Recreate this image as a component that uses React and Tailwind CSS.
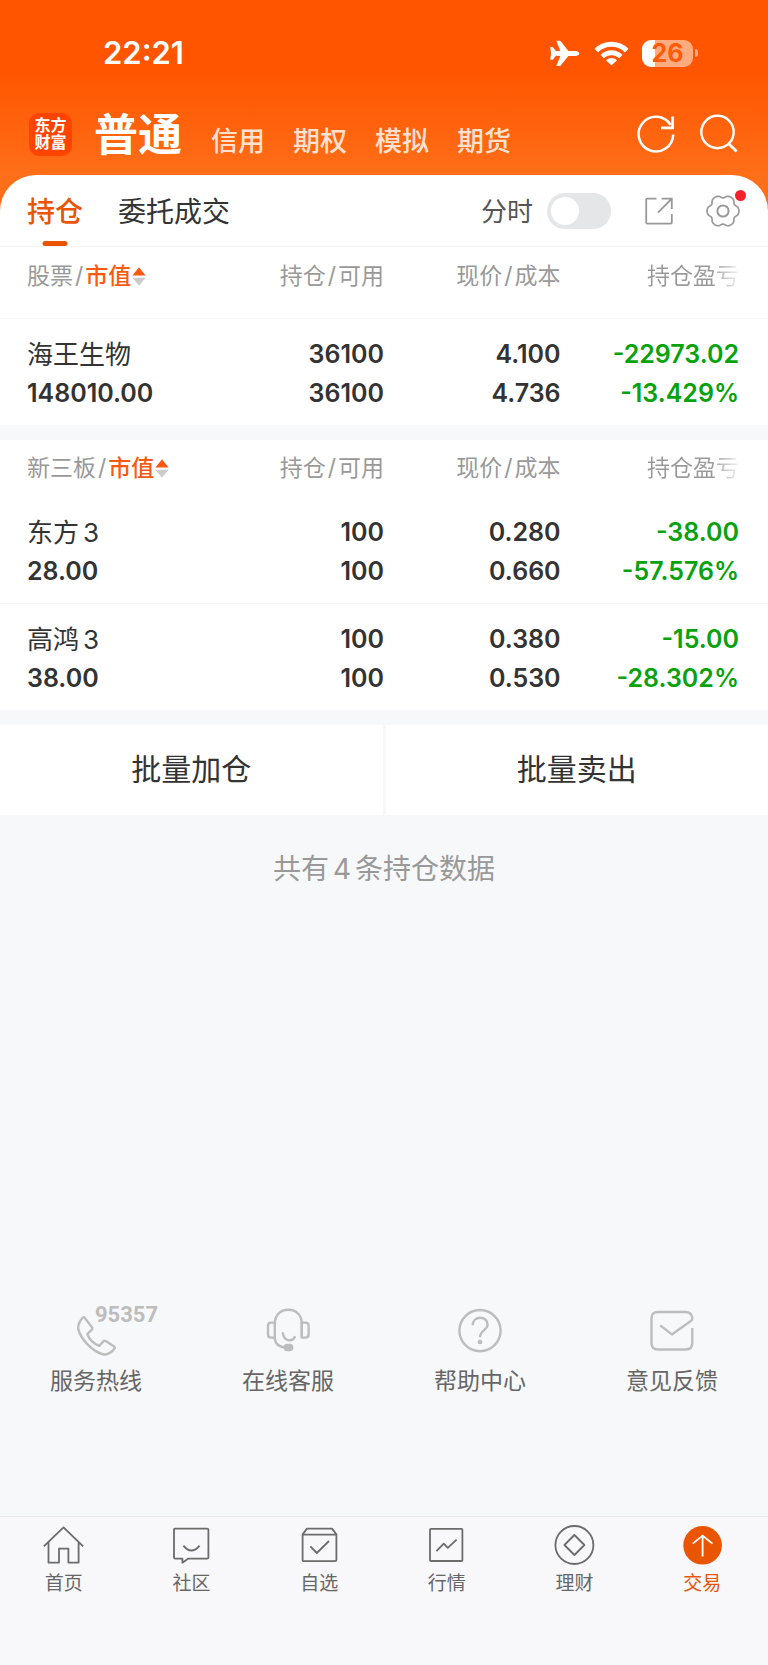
import React from "react";

const TOP_TABS = ["信用", "期权", "模拟", "期货"];

const SECTIONS = [
  {
    title: "股票",
    spaced: true,
    rows: [
      { name: "海王生物", suffix: "", value: "148010.00", held: "36100", free: "36100", price: "4.100", cost: "4.736", profit: "-22973.02", rate: "-13.429%" },
    ],
  },
  {
    title: "新三板",
    spaced: false,
    rows: [
      { name: "东方", suffix: "3", value: "28.00", held: "100", free: "100", price: "0.280", cost: "0.660", profit: "-38.00", rate: "-57.576%" },
      { name: "高鸿", suffix: "3", value: "38.00", held: "100", free: "100", price: "0.380", cost: "0.530", profit: "-15.00", rate: "-28.302%" },
    ],
  },
];

const GEAR_POINTS = Array.from({ length: 90 }, (_, i) => {
  const a = (i * 4 * Math.PI) / 180;
  const r = 14.8 + 1.4 * Math.cos(6 * a) - 0.35 * Math.cos(12 * a);
  return `${(18 + r * Math.cos(a)).toFixed(2)},${(18 + r * Math.sin(a)).toFixed(2)}`;
}).join(" ");

function StatusBar() {
  return (
    <div className="flex h-[100px] items-center justify-between pt-1.5 pl-[103px] pr-[70px]">
      <span className="text-[31px] leading-10 font-semibold">22:21</span>
      <div className="flex items-center">
        <svg className="mr-3.5 h-[27px] w-[30px]" viewBox="0 0 30 27" fill="#fff" aria-hidden="true">
          <path d="M.3 7.6Q.3 7 1 7H2.2Q2.8 7 3.2 7.5L6 11 10.4 10.9 6.5 1.4Q6.3.7 7 .7H9.6Q10.3.7 10.7 1.2L18.4 10.9H25C28 11 29.4 12.4 29.4 13.4S28 15.8 25 15.9H18.4L10.7 25.6Q10.3 26.1 9.6 26.1H7Q6.3 26.1 6.5 25.4L10.4 15.9 6 15.8 3.2 19.3Q2.8 19.8 2.2 19.8H1Q.3 19.8.3 19.2L1 13.4Z" />
        </svg>
        <svg className="mr-[13px] h-[25px] w-[35px]" viewBox="0 0 35 25" fill="none" stroke="#fff" aria-hidden="true">
          <path d="M2.3 9.6a21.6 21.6 0 0 1 30.4 0" strokeWidth="5" />
          <path d="M8.2 15.6a13.2 13.2 0 0 1 18.6 0" strokeWidth="4.8" />
          <path d="M17.5 24.6 12 19.2a8 8 0 0 1 11 0Z" fill="#fff" stroke="none" />
        </svg>
        <div className="flex h-[27px] w-[51px] items-center justify-center rounded-[9px] bg-[linear-gradient(90deg,#fff_13px,#ffab80_13px)] text-[25px] leading-[27px] font-bold text-[#ff5a05]">
          26
        </div>
        <div className="ml-0.5 h-2 w-[3px] rounded-r-full bg-[#ffab80]" />
      </div>
    </div>
  );
}

function Header() {
  return (
    <header className="flex h-[75px] items-center pr-[29px] pl-[29px] text-white">
      <div className="mb-[7px] flex size-[43px] flex-col items-center justify-center rounded-[10px] bg-[#ff4400] text-base leading-[17px] font-bold">
        <span>东方</span>
        <span>财富</span>
      </div>
      <nav className="mb-[5px] ml-[22px] flex items-baseline gap-7">
        <a href="#normal" className="mr-px text-[44px] leading-[52px] font-bold">普通</a>
        {TOP_TABS.map((t) => (
          <a key={t} href={`#${t}`} className="text-[27px] leading-8 font-medium text-[#ffe1d0]">{t}</a>
        ))}
      </nav>
      <div className="mb-[7px] ml-auto flex items-center gap-[23px]">
        <button type="button" aria-label="刷新">
          <svg className="size-10" viewBox="0 0 40 40" fill="none" stroke="#fff" strokeWidth="2.5">
            <path d="M37.2 20.6A17.3 17.3 0 1 1 34.6 11" />
            <path d="M36.6 2.6V13.8H25" strokeWidth="2.8" />
          </svg>
        </button>
        <button type="button" aria-label="搜索">
          <svg className="size-10" viewBox="0 0 40 40" fill="none" stroke="#fff" strokeWidth="2.4">
            <circle cx="18.5" cy="18" r="16.2" />
            <path d="M29.2 29.2 37.6 37.6" strokeWidth="2.8" />
          </svg>
        </button>
      </div>
    </header>
  );
}

function Toolbar() {
  return (
    <div className="flex h-[72px] items-center border-b border-[#f3f3f5] pr-[27px] pl-[27px]">
      <nav className="flex gap-[35px] text-[28px]">
        <a href="#positions" className="relative pt-[3px] leading-[68px] font-medium text-[#ea5504]">
          持仓
          <span className="absolute bottom-0 left-1/2 h-[5px] w-[25px] -translate-x-1/2 rounded-sm bg-[#ea5504]" />
        </a>
        <a href="#orders" className="pt-[3px] leading-[68px] text-[#333]">委托成交</a>
      </nav>
      <label htmlFor="intraday" className="mr-3.5 ml-auto pt-0.5 text-[26px] leading-9 text-[#555]">分时</label>
      <input
        id="intraday"
        type="checkbox"
        role="switch"
        className="h-9 w-16 appearance-none rounded-full bg-[#e5e6e8] p-1 before:block before:size-7 before:rounded-full before:bg-white checked:bg-[#ea5504] checked:before:ml-auto"
      />
      <button type="button" aria-label="分享" className="ml-8">
        <svg className="size-8" viewBox="0 0 32 32" fill="none" stroke="#999" strokeWidth="1.8">
          <path d="M13.5 3.6H4.2Q3.2 3.6 3.2 4.6V27.6Q3.2 28.6 4.2 28.6H27.8Q28.8 28.6 28.8 27.6V19" />
          <path d="M18.6 3.6H28.8V14M28.4 4 15 17.6" />
        </svg>
      </button>
      <button type="button" aria-label="设置" className="relative ml-[30px]">
        <svg className="size-9" viewBox="0 0 36 36" fill="none" stroke="#999" strokeWidth="1.7">
          <polygon points={GEAR_POINTS} strokeLinejoin="round" />
          <circle cx="18" cy="18" r="5.6" strokeWidth="2" />
        </svg>
        <span className="absolute -top-[3px] -right-[5px] size-[11px] rounded-full bg-[#f5222d]" />
      </button>
    </div>
  );
}

function Slash() {
  return <span className="mx-0.5">/</span>;
}

function Holdings({ section }) {
  const head = section.spaced ? "h-[71px] pb-3 font-normal" : "h-[57px] font-normal";
  return (
    <table className="w-full table-fixed bg-white text-right text-[25px] leading-[39px] font-semibold text-[#333]">
      <colgroup>
        <col className="w-[26%]" />
        <col className="w-[24%]" />
        <col className="w-[23%]" />
        <col className="w-[27%]" />
      </colgroup>
      <thead className="text-[23px] leading-8 text-[#999]">
        <tr className={section.spaced ? "border-b border-[#f5f5f6]" : ""}>
          <th scope="col" className={`${head} pl-[27px] text-left`}>
            <button type="button" className="flex items-center whitespace-nowrap">
              {section.title}
              <Slash />
              <span className="font-medium text-[#fa5a10]">市值</span>
              <svg className="ml-px h-[19px] w-[14px]" viewBox="0 0 14 19" aria-hidden="true">
                <path d="M7 .2 13.6 8.4H.4Z" fill="#fa5a10" />
                <path d="M7 18.8 13.6 10.8H.4Z" fill="#ccc" />
              </svg>
            </button>
          </th>
          <th scope="col" className={head}>持仓<Slash />可用</th>
          <th scope="col" className={head}>现价<Slash />成本</th>
          <th scope="col" className={`${head} pr-[29px]`}>
            <span className="bg-[linear-gradient(90deg,#999_70%,#f4f4f4)] bg-clip-text text-transparent">持仓盈亏</span>
          </th>
        </tr>
      </thead>
      <tbody>
        {section.rows.map((r) => (
          <tr key={r.name} className="border-b border-[#f5f5f6] last:border-b-0">
            <td className="pt-4 pb-3 pl-[27px] text-left">
              <div className="text-[26px] leading-[39px] font-normal">
                {r.name}
                {r.suffix && <span className="ml-1">{r.suffix}</span>}
              </div>
              <div>{r.value}</div>
            </td>
            <td className="pt-4 pb-3"><div>{r.held}</div><div>{r.free}</div></td>
            <td className="pt-4 pb-3"><div>{r.price}</div><div>{r.cost}</div></td>
            <td className="pt-4 pr-[29px] pb-3 text-[#07a20c]"><div>{r.profit}</div><div>{r.rate}</div></td>
          </tr>
        ))}
      </tbody>
    </table>
  );
}

const SERVICES = [
  {
    label: "服务热线",
    icon: (
      <path d="M12.6 9.6 20 19.4Q20.8 20.6 19.8 21.6L15.3 26.2C17.5 31.5 22.5 36 27.2 37.8L31.6 33.2Q32.6 32.2 33.8 33L42 38.6Q43.4 39.6 42.4 40.8C39.5 44.6 35.5 47.6 30 46 19 42.5 8.5 30 6.4 21.6 5.4 17.6 8 13 10.6 9.8Q11.8 8.6 12.6 9.6Z" />
    ),
  },
  {
    label: "在线客服",
    icon: (
      <>
        <path d="M10.8 32V16C10.8 7 16.3 1.8 24.3 1.8S37.8 7 37.8 16V29.6" />
        <path d="M10.8 14.6H7.2Q4 14.6 4 17.8V26.4Q4 29.6 7.2 29.6H10.8M37.8 14.6H41.4Q44.6 14.6 44.6 17.8V26.4Q44.6 29.6 41.4 29.6H37.8Z" />
        <path d="M10.8 29C10.8 35 14.3 38.8 20.8 39.4M18.8 25.2C19.8 33.5 28.3 34 30.8 29" strokeLinecap="round" />
        <rect x="20.8" y="37" width="7.4" height="5" rx="2.5" fill="#bdbdbd" />
      </>
    ),
  },
  {
    label: "帮助中心",
    icon: (
      <>
        <circle cx="24" cy="22.6" r="20.6" />
        <path d="M16.8 17.2C16.8 7 31.6 7.6 31.6 16.6 31.6 22 24 22.5 24 29.2" />
        <circle cx="24" cy="34" r="2.3" fill="#bdbdbd" stroke="none" />
      </>
    ),
  },
  {
    label: "意见反馈",
    icon: (
      <path d="M44.3 20V35.1Q44.3 41.5 37.9 41.5H9.9Q3.5 41.5 3.5 35.1V10.4Q3.5 4 9.9 4H37.5Q43.5 4 44.3 9.6 44.7 11.6 43.1 12.8L23.9 26.4 12.2 17.4" />
    ),
  },
];

function Services() {
  return (
    <section className="mt-auto grid grid-cols-4 pb-[119px]">
      {SERVICES.map((s, i) => (
        <a key={s.label} href={`#service-${i}`} className="flex flex-col items-center text-[23px] leading-8 text-[#666]">
          <span className="relative mb-[9px] block">
            <svg className="h-12 w-12" viewBox="0 0 48 48" fill="none" stroke="#bdbdbd" strokeWidth="2.4" strokeLinejoin="round" aria-hidden="true">
              {s.icon}
            </svg>
            {i === 0 && (
              <span className="absolute -top-[5px] left-[23px] font-[Roboto,sans-serif] text-[22px] leading-6 font-bold text-[#bdbdbd]">95357</span>
            )}
          </span>
          {s.label}
        </a>
      ))}
    </section>
  );
}

const NAV = [
  {
    label: "首页",
    icon: <path d="M.8 21.4 20.5 2.4 40.2 21.4M5.5 17V37.6H16V23.6H25.4V37.6H35.6V17" />,
  },
  {
    label: "社区",
    icon: (
      <>
        <path d="M4.2 3.6H36.2Q37.4 3.6 37.4 4.8V32.4Q37.4 33.6 36.2 33.6H17.4L11.4 37.8V33.6H4.2Q3 33.6 3 32.4V4.8Q3 3.6 4.2 3.6Z" />
        <path d="M12.4 20.6Q20.4 30.4 28.6 20.6" />
      </>
    ),
  },
  {
    label: "自选",
    icon: (
      <>
        <path d="M3.6 35V9.4L8 3.6H33L37.4 9.4V35Q37.4 36.2 36.2 36.2H4.8Q3.6 36.2 3.6 35ZM3.6 9.6H37.4" />
        <path d="M11.4 21.4 17.8 28 30 16" />
      </>
    ),
  },
  {
    label: "行情",
    icon: (
      <>
        <rect x="4" y="3.8" width="32.4" height="32.2" rx="1" />
        <path d="M10.4 26.2 17.8 18.6 21.8 22.8 30.6 14.6" />
      </>
    ),
  },
  {
    label: "理财",
    icon: (
      <>
        <circle cx="20.4" cy="20" r="19" />
        <path d="M20.4 10 30.4 20 20.4 30 10.4 20Z" />
      </>
    ),
  },
  {
    label: "交易",
    active: true,
    icon: (
      <>
        <circle cx="20.6" cy="20.3" r="19.3" fill="#ea5504" stroke="none" />
        <path d="M20.6 31.4V11M10.8 18.6 20.6 10.6 30.4 18.6" stroke="#fff" />
      </>
    ),
  },
];

function BottomNav() {
  return (
    <nav className="grid h-[149px] grid-cols-6 items-start border-t border-[#e9e9ec] bg-[#f8f8fb] pt-2 pr-0.5">
      {NAV.map((n, i) => (
        <a
          key={n.label}
          href={`#nav-${i}`}
          className={n.active ? "flex flex-col items-center text-[19px] leading-7 text-[#ea5504]" : "flex flex-col items-center text-[19px] leading-7 text-[#666]"}
        >
          <svg className="mb-[5px] h-10 w-[41px]" viewBox="0 0 41 40" fill="none" stroke="#6b6b6b" strokeWidth="1.8" strokeLinejoin="round" aria-hidden="true">
            {n.icon}
          </svg>
          {n.label}
        </a>
      ))}
    </nav>
  );
}

export default function App() {
  return (
    <div className="flex min-h-screen flex-col bg-[#f7f8fa] font-[Inter,'Noto_Sans_CJK_SC',sans-serif]">
      <div className="bg-[linear-gradient(#ff5500_70px,#ff6e18_175px)] text-white">
        <StatusBar />
        <Header />
        <div className="rounded-t-[36px] bg-white">
          <Toolbar />
        </div>
      </div>
      <main className="flex flex-1 flex-col">
        <div className="flex flex-col gap-[15px]">
          {SECTIONS.map((s) => (
            <Holdings key={s.title} section={s} />
          ))}
          <div className="grid grid-cols-2 gap-[3px] text-[30px] text-[#333]">
            <button type="button" className="h-[90px] bg-white">批量加仓</button>
            <button type="button" className="h-[90px] bg-white">批量卖出</button>
          </div>
        </div>
        <p className="mt-[34px] text-center text-[28px] leading-10 text-[#999]">
          共有<span className="mx-1">4</span>条持仓数据
        </p>
        <Services />
      </main>
      <BottomNav />
    </div>
  );
}
